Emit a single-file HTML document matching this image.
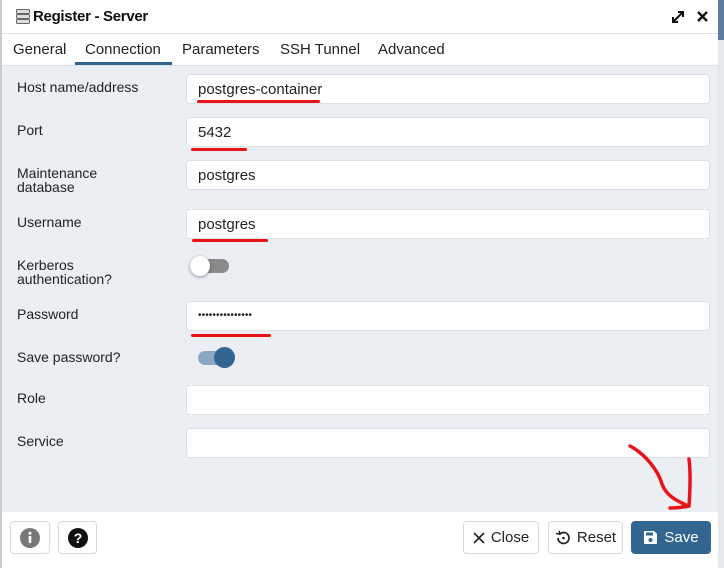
<!DOCTYPE html>
<html><head><style>
*{box-sizing:border-box;margin:0;padding:0}
body{width:724px;height:568px;background:#fff;font-family:"Liberation Sans",sans-serif;position:relative;overflow:hidden;color:#222}
.a{position:absolute}
.lbl{position:absolute;left:17px;font-size:14px;color:#222;line-height:14px}
.inp{position:absolute;left:186px;width:524px;height:30px;background:#fff;border:1px solid #dde0e6;border-radius:4px;font-size:15px;padding:6px 11px;color:#222}
.red{position:absolute;height:3px;background:#e8141a;border-radius:2px}
.btn{position:absolute;top:521px;height:33px;border:1px solid #d5d9e0;border-radius:4px;background:#fff;font-size:15px;color:#222;display:flex;align-items:center;justify-content:center;gap:6px}
</style></head><body>
<div class="a" style="left:0;top:0;width:2px;height:568px;background:#c8ccd2"></div>
<div class="a" style="left:718px;top:0;width:6px;height:568px;background:#e4e7eb"></div>
<div class="a" style="left:718px;top:0;width:6px;height:40px;background:#5a7da0"></div>
<svg class="a" style="left:16px;top:9px" width="14" height="15" viewBox="0 0 14 15"><rect x="0.5" y="0.5" width="13" height="4" rx="1" fill="#ddd" stroke="#666"/><rect x="0.5" y="5.5" width="13" height="4" rx="1" fill="#ddd" stroke="#666"/><rect x="0.5" y="10.5" width="13" height="4" rx="1" fill="#ddd" stroke="#666"/></svg>
<div class="a" style="left:33px;top:8px;font-size:15px;font-weight:bold;color:#111;letter-spacing:-0.3px">Register - Server</div>
<svg class="a" style="left:671px;top:10px" width="14" height="14" viewBox="0 0 14 14"><path d="M2 12L12 2M7 2h5v5M2 7v5h5" stroke="#111" stroke-width="2" fill="none"/></svg>
<svg class="a" style="left:697px;top:11px" width="11" height="11" viewBox="0 0 11 11"><path d="M1 1L10 10M10 1L1 10" stroke="#111" stroke-width="2.4"/></svg>
<div class="a" style="left:2px;top:33px;width:716px;height:1px;background:#dde0e6"></div>
<div class="a" style="left:13px;top:41px;font-size:15px;color:#222">General</div>
<div class="a" style="left:85px;top:41px;font-size:15px;color:#222">Connection</div>
<div class="a" style="left:182px;top:41px;font-size:15px;color:#222">Parameters</div>
<div class="a" style="left:280px;top:41px;font-size:15px;color:#222">SSH Tunnel</div>
<div class="a" style="left:378px;top:41px;font-size:15px;color:#222">Advanced</div>
<div class="a" style="left:75px;top:62px;width:97px;height:3px;background:#326690"></div>
<div class="a" style="left:2px;top:65px;width:716px;height:447px;background:#ebeef3;border-top:1px solid #dde0e6"></div>
<div class="lbl" style="top:80px">Host name/address</div>
<div class="inp" style="top:74px">postgres-container</div>
<div class="red" style="left:197px;top:100px;width:123px"></div>
<div class="lbl" style="top:123px">Port</div>
<div class="inp" style="top:117px">5432</div>
<div class="red" style="left:191px;top:148px;width:56px"></div>
<div class="lbl" style="top:166px">Maintenance<br>database</div>
<div class="inp" style="top:160px">postgres</div>
<div class="lbl" style="top:215px">Username</div>
<div class="inp" style="top:209px">postgres</div>
<div class="red" style="left:192px;top:239px;width:76px"></div>
<div class="lbl" style="top:258px">Kerberos<br>authentication?</div>
<div class="a" style="left:193px;top:259px;width:36px;height:14px;border-radius:7px;background:#8a8a8a"></div>
<div class="a" style="left:190px;top:256px;width:20px;height:20px;border-radius:50%;background:#fff;box-shadow:0 1px 3px rgba(0,0,0,.4)"></div>
<div class="lbl" style="top:307px">Password</div>
<div class="inp" style="top:301px;font-size:10px;padding-top:8px;letter-spacing:0.1px">•••••••••••••••</div>
<div class="red" style="left:191px;top:334px;width:80px"></div>
<div class="lbl" style="top:350px">Save password?</div>
<div class="a" style="left:198px;top:351px;width:36px;height:14px;border-radius:7px;background:#8aa6c0"></div>
<div class="a" style="left:214px;top:347px;width:21px;height:21px;border-radius:50%;background:#326690"></div>
<div class="lbl" style="top:391px">Role</div>
<div class="inp" style="top:385px"></div>
<div class="lbl" style="top:434px">Service</div>
<div class="inp" style="top:428px"></div>
<svg class="a" style="left:620px;top:440px" width="80" height="75" viewBox="0 0 80 75"><path d="M10 6C25 14 38 30 42 44C46 55 55 60 68 66M69 19C71 35 70 52 69 66M50 68C58 68 64 67 69 66" stroke="#e8141a" stroke-width="3.5" fill="none" stroke-linecap="round"/></svg>
<div class="btn" style="left:10px;width:40px"><svg width="20" height="20" viewBox="0 0 20 20"><circle cx="10" cy="10" r="10" fill="#777"/><rect x="8.7" y="8" width="2.6" height="7" fill="#fff"/><circle cx="10" cy="5.3" r="1.5" fill="#fff"/></svg></div>
<div class="btn" style="left:58px;width:39px"><svg width="20" height="20" viewBox="0 0 20 20"><circle cx="10" cy="10" r="10" fill="#111"/><text x="10" y="15" text-anchor="middle" font-size="14" font-weight="bold" fill="#fff" font-family="Liberation Sans">?</text></svg></div>
<div class="btn" style="left:463px;width:76px"><svg width="12" height="12" viewBox="0 0 12 12"><path d="M1 1L11 11M11 1L1 11" stroke="#222" stroke-width="1.6"/></svg>Close</div>
<div class="btn" style="left:548px;width:75px"><svg width="16" height="16" viewBox="0 0 16 16"><path d="M3 8a5.5 5.5 0 1 0 1.6-3.9" stroke="#222" stroke-width="1.7" fill="none"/><path d="M1 3.5L4.8 4.2L4.2 0.8" stroke="#222" stroke-width="1.5" fill="none"/><circle cx="8.5" cy="8" r="1.3" fill="#222"/></svg>Reset</div>
<div class="btn" style="left:631px;width:80px;background:#326690;border-color:#326690;color:#fff"><svg width="15" height="15" viewBox="0 0 15 15"><path d="M1 2a1 1 0 0 1 1-1h9l3 3v9a1 1 0 0 1-1 1H2a1 1 0 0 1-1-1z" fill="#fff"/><rect x="3" y="2.5" width="7" height="3" fill="#326690"/><circle cx="7.5" cy="10" r="2" fill="#326690"/></svg>Save</div>
</body></html>
